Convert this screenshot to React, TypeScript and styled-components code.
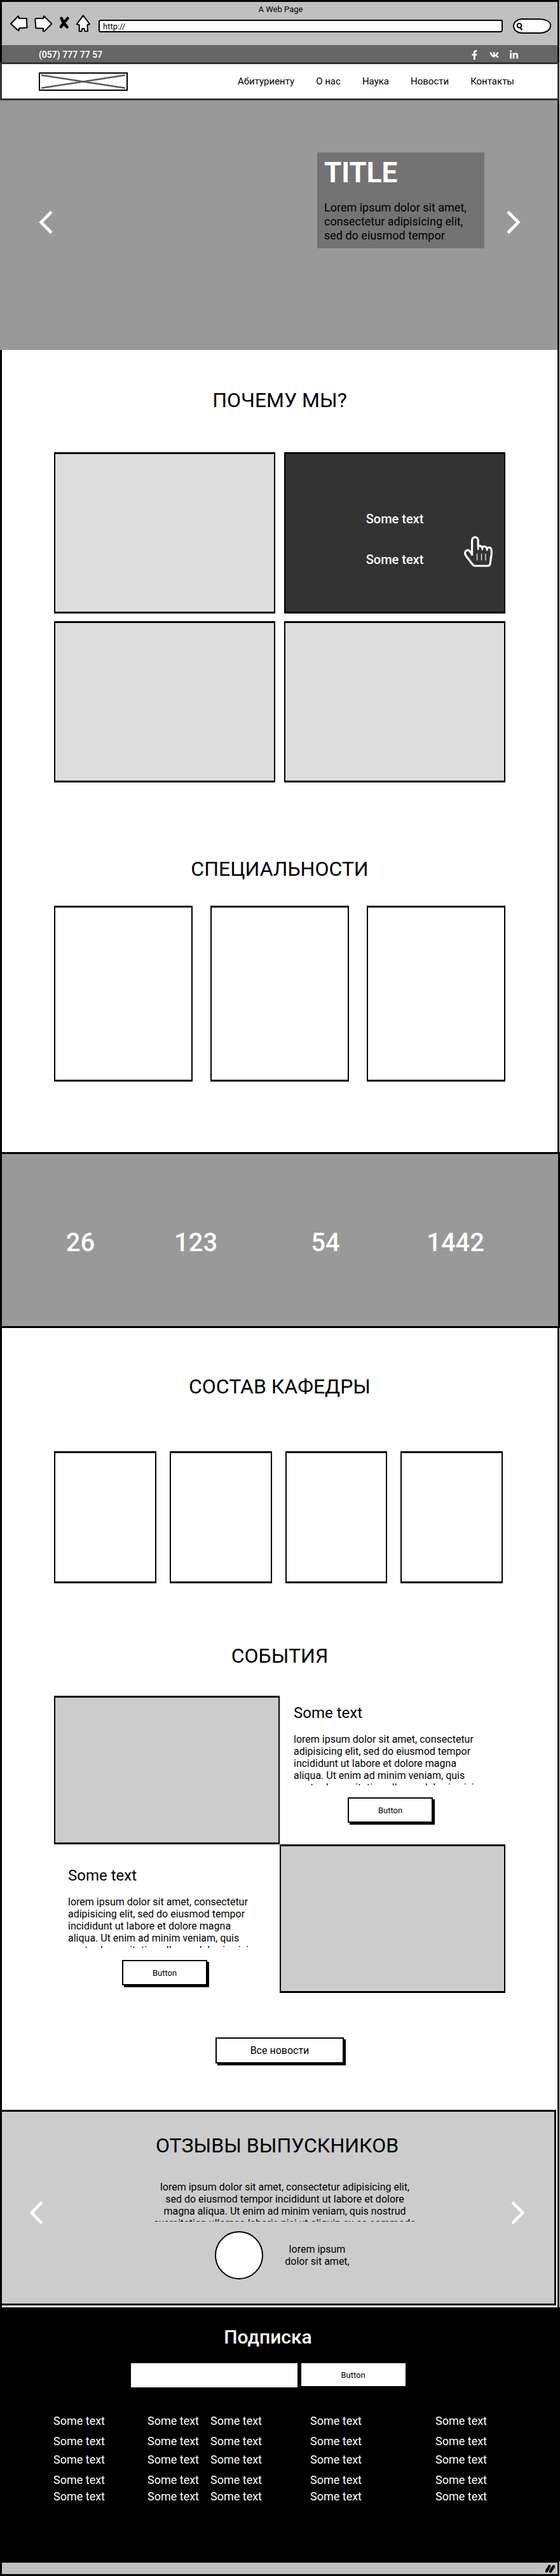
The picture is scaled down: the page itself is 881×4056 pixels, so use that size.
import React from "react";
import styled, { createGlobalStyle } from "styled-components";
import { FaFacebookF, FaLinkedinIn, FaVk } from "react-icons/fa";

const GlobalStyle = createGlobalStyle`
  *, *::before, *::after { box-sizing: border-box; }
  body {
    margin: 0;
    background: #fff;
    color: #000;
    font-family: Roboto, "Liberation Sans", sans-serif;
    font-size: 16px;
    line-height: 19px;
  }
  h1, h2, h3, p, ul { margin: 0; padding: 0; font-weight: 400; }
  ul { list-style: none; }
  a { color: inherit; text-decoration: none; }
  button, input { font: inherit; color: inherit; border-radius: 0; }
  svg { display: block; overflow: visible; }
`;

/* ---------- browser window ---------- */

const Window = styled.div`
  margin-right: 1px;
  border: solid #000;
  border-width: 3px 3px 0 3px;
`;

const Chrome = styled.header`
  padding: 2px 10px 18px 13px;
  background: #c0c0c0;
`;

const WindowTitle = styled.div`
  font-size: 13px;
  text-align: center;
`;

const Toolbar = styled.div`
  display: flex;
  align-items: flex-end;
  gap: 16px;
`;

const ToolGroup = styled.div`
  display: flex;
  gap: 10px;
  margin-right: -3px;
  padding-bottom: 2px;
`;

const IconButton = styled.button`
  flex: none;
  padding: 0;
  border: 0;
  background: none;
  cursor: pointer;
`;

const UrlInput = styled.input`
  flex: 1;
  min-width: 0;
  height: 20px;
  margin-bottom: 2px;
  padding: 0 5px;
  border: 2px solid #000;
  border-radius: 3px 2px 4px 3px;
  background: #fff;
  font-size: 13px;
`;

const SearchBox = styled.label`
  display: flex;
  align-items: center;
  width: 60px;
  height: 24px;
  padding: 0 4px 0 3px;
  border: 2px solid #000;
  border-radius: 14px 20px 18px 14px / 12px 10px 12px 12px;
  background: #fff;

  input {
    min-width: 0;
    width: 100%;
    padding: 0;
    border: 0;
    outline: 0;
    background: none;
    font-size: 13px;
  }
`;

const StatusBar = styled.div`
  display: flex;
  align-items: center;
  justify-content: flex-end;
  height: 23px;
  padding-right: 3px;
  border: solid #000;
  border-width: 2px 0 3px;
  background: #c0c0c0;
`;

/* ---------- site header ---------- */

const TopBar = styled.div`
  display: flex;
  align-items: center;
  justify-content: space-between;
  height: 27px;
  padding: 3px 61px 0 58px;
  background: #666;
  color: #fff;
  font-size: 14px;
  font-weight: 600;
`;

const Socials = styled.div`
  display: flex;
  gap: 16px;
`;

const SiteHeader = styled.div`
  display: flex;
  align-items: center;
  justify-content: space-between;
  height: 60px;
  margin: 0 -3px;
  padding: 0 68px 0 61px;
  border: 3px solid #333;
`;

const Logo = styled.a`
  display: block;
  width: 140px;
  height: 29px;
  margin-left: -3px;
  border: 2px solid #000;
`;

const Nav = styled.nav`
  display: flex;
  gap: 34px;
  font-size: 15px;
`;

/* ---------- hero ---------- */

const Hero = styled.section`
  display: flex;
  align-items: flex-start;
  justify-content: space-between;
  height: 393px;
  margin-left: -3px;
  padding: 82px 58px 0 61px;
  background: #999;
`;

const HeroArrow = styled(IconButton)`
  margin-top: 92px;
`;

const HeroCard = styled.div`
  width: 263px;
  margin: 0 35px 0 auto;
  padding: 8px 11px 9px;
  background: #737373;

  h1 {
    margin-bottom: 20px;
    color: #fff;
    font-size: 44px;
    font-weight: 700;
    line-height: 48px;
  }

  p {
    font-size: 18px;
    line-height: 22px;
  }
`;

/* ---------- content sections ---------- */

const Section = styled.section<{ $top: number; $bottom?: number }>`
  padding: ${(p) => p.$top}px 82px ${(p) => p.$bottom ?? 0}px;
`;

const Heading = styled.h2<{ $gap: number }>`
  margin-bottom: ${(p) => p.$gap}px;
  font-size: 32px;
  line-height: 40px;
  text-align: center;
`;

const Grid = styled.div<{ $columns: number; $gap: string }>`
  display: grid;
  grid-template-columns: repeat(${(p) => p.$columns}, 1fr);
  gap: ${(p) => p.$gap};
`;

const StaffGrid = styled(Grid)`
  margin-right: 4px;
`;

const Box = styled.div<{ $height: number; $fill?: string }>`
  position: relative;
  height: ${(p) => p.$height}px;
  border: solid #000;
  border-width: 3px 2px;
  background: ${(p) => p.$fill ?? "#fff"};
`;

const HoverBox = styled(Box)`
  display: flex;
  flex-direction: column;
  align-items: center;
  gap: 40px;
  padding-top: 90px;
  color: #fff;
  font-size: 20px;
  font-weight: 500;
  line-height: 24px;
`;

const HandCursor = styled.svg`
  position: absolute;
  top: 129px;
  right: 18px;
`;

const Stats = styled.section`
  display: grid;
  grid-template-columns: 183fr 181fr 227fr 183fr;
  align-items: center;
  height: 277px;
  margin: 0 -4px 0 -3px;
  padding: 8px 70px 0 32px;
  border: solid #000;
  border-width: 3px;
  background: #999;
  color: #fff;
  font-size: 40px;
  font-weight: 500;
  line-height: 48px;
  text-align: center;
`;

/* ---------- events ---------- */

const EventText = styled.article<{ $top: number }>`
  padding: ${(p) => p.$top}px 37px 0 22px;

  h3 {
    margin-bottom: 18px;
    font-size: 24px;
    line-height: 28px;
  }

  p {
    height: 82px;
    margin-bottom: 19px;
    overflow: hidden;
  }
`;

const ShadowButton = styled.button<{ $wide?: boolean }>`
  display: block;
  width: ${(p) => (p.$wide ? 202 : 134)}px;
  height: ${(p) => (p.$wide ? 41 : 40)}px;
  margin: ${(p) => (p.$wide ? "70px auto 0" : "0 0 0 85px")};
  padding: 0;
  border: 2px solid #000;
  background: #fff;
  box-shadow: 3px 3px 0 #000;
  font-size: ${(p) => (p.$wide ? 16 : 13)}px;
  cursor: pointer;
`;

/* ---------- testimonials ---------- */

const Testimonials = styled.section`
  margin: 0 2px 3px -3px;
  padding: 33px 46px 38px 43px;
  border: 3px solid #000;
  background: #ccc;
`;

const Slider = styled.div`
  display: flex;
  align-items: flex-start;
  justify-content: space-between;
`;

const SliderArrow = styled(IconButton)`
  margin-top: 32px;
`;

const Review = styled.div`
  display: flex;
  flex-direction: column;
  align-items: center;
  gap: 15px;
  padding-left: 24px;
  text-align: center;

  > p {
    width: 416px;
    height: 64px;
    overflow: hidden;
  }
`;

const Author = styled.div`
  display: flex;
  align-items: center;
  gap: 32px;
  padding-right: 6px;

  p { width: 106px; }
`;

const Avatar = styled.div`
  width: 76px;
  height: 76px;
  border: 2px solid #000;
  border-radius: 50%;
  background: #fff;
`;

/* ---------- footer ---------- */

const Footer = styled.footer`
  margin: 0 -4px 0 -3px;
  padding: 27px 86px 92px 84px;
  background: #000;
  color: #fff;
`;

const Subscribe = styled.form`
  display: grid;
  grid-template-columns: 262px 164px;
  justify-content: center;
  gap: 21px 6px;
  margin: 0 36px 43px 0;

  h2 {
    grid-column: 1 / -1;
    font-size: 30px;
    font-weight: 500;
    line-height: 40px;
    text-align: center;
  }

  input {
    height: 38px;
    padding: 0 8px;
    border: 0;
    background: #fff;
    color: #000;
  }

  button {
    height: 36px;
    border: 0;
    background: #fff;
    color: #000;
    font-size: 13px;
    cursor: pointer;
  }
`;

const FooterLinks = styled.nav`
  display: grid;
  grid-template-columns: 148fr 99fr 157fr 197fr 110fr;
  font-size: 18px;
  font-weight: 500;
  line-height: 20px;
  white-space: nowrap;

  ul {
    display: grid;
    grid-template-rows: 32px 29px 32px 26px 20px;
  }
`;

const Arrow = ({ right }: { right?: boolean }) => (
  <svg width="22" height="36" viewBox="0 0 22 36" fill="none" stroke="#fff" strokeWidth="4.6">
    <path d={right ? "M2 1.5 L18.5 18 L2 34.5" : "M20 1.5 L3.5 18 L20 34.5"} />
  </svg>
);

const lorem =
  "lorem ipsum dolor sit amet, consectetur adipisicing elit, sed do eiusmod tempor incididunt ut labore et dolore magna aliqua. Ut enim ad minim veniam, quis nostrud exercitation ullamco laboris nisi ut aliquip ex ea commodo";

const navItems = ["Абитуриенту", "О нас", "Наука", "Новости", "Контакты"];
const stats = ["26", "123", "54", "1442"];
const range = (n: number) => Array.from({ length: n }, (_, i) => i);

const EventItem = ({ top }: { top: number }) => (
  <EventText $top={top}>
    <h3>Some text</h3>
    <p>{lorem}</p>
    <ShadowButton type="button">Button</ShadowButton>
  </EventText>
);

export default function App() {
  return (
    <>
      <GlobalStyle />
      <Window>
        <Chrome>
          <WindowTitle>A Web Page</WindowTitle>
          <Toolbar>
            <ToolGroup>
              <IconButton type="button" aria-label="Back">
                <svg width="28" height="27" fill="#fff" stroke="#000" strokeWidth="2" strokeLinejoin="round">
                  <path d="M1 13.5 L12.5 1.5 Q14 1 13.6 4.8 L25.8 5 Q26 12 26.6 19.6 L14 20.4 L13.6 24 Q12.5 24.5 11 22.5 Z" />
                </svg>
              </IconButton>
              <IconButton type="button" aria-label="Forward">
                <svg width="28" height="27" fill="#fff" stroke="#000" strokeWidth="2" strokeLinejoin="round">
                  <path d="M1.2 6 L3 5 L14.2 5 L15 1.2 L27.4 13.4 L15.6 25.4 L13.8 24.8 L14.2 20.8 L2.4 20.2 Q2 13 1.2 6 Z" />
                </svg>
              </IconButton>
              <IconButton type="button" aria-label="Stop">
                <svg width="18" height="27" fill="none" stroke="#000" strokeWidth="4.6" strokeLinecap="round">
                  <path d="M4.6 4.8 Q8 13 13.6 18.6 M14.4 4.8 Q9 10 4 18.2" />
                </svg>
              </IconButton>
              <IconButton type="button" aria-label="Home">
                <svg width="22" height="27" fill="#fff" stroke="#000" strokeWidth="2" strokeLinejoin="round">
                  <path d="M10.8 0.4 L21.2 14 L17.4 15.2 L18 25 L13.4 25.2 L12.6 21 L9.2 21 L8.4 25.2 L4.6 25.2 L4.8 15.4 L0.8 14 Z" />
                </svg>
              </IconButton>
            </ToolGroup>
            <UrlInput aria-label="Address" defaultValue="http://" />
            <SearchBox>
              <svg width="10" height="11" fill="none" stroke="#000" strokeWidth="2" strokeLinecap="round">
                <circle cx="5" cy="4.4" r="3.4" />
                <path d="M6.6 7.6 L8.8 10.6" />
              </svg>
              <input aria-label="Search" />
            </SearchBox>
          </Toolbar>
        </Chrome>

        <TopBar>
          <a href="tel:0577777757">(057) 777 77 57</a>
          <Socials>
            <a href="#facebook" aria-label="Facebook"><FaFacebookF size={15} /></a>
            <a href="#vk" aria-label="VK"><FaVk size={15} /></a>
            <a href="#linkedin" aria-label="LinkedIn"><FaLinkedinIn size={15} /></a>
          </Socials>
        </TopBar>

        <SiteHeader>
          <Logo href="#home" aria-label="Home page">
            <svg width="100%" height="100%" viewBox="0 0 136 25" preserveAspectRatio="none" stroke="#595959" strokeWidth="2.6" strokeLinecap="round">
              <path d="M3 2.5 L133 22.5 M3 22.5 L133 2.5" />
            </svg>
          </Logo>
          <Nav>
            {navItems.map((item) => (
              <a key={item} href="#nav">{item}</a>
            ))}
          </Nav>
        </SiteHeader>

        <Hero>
          <HeroArrow type="button" aria-label="Previous slide"><Arrow /></HeroArrow>
          <HeroCard>
            <h1>TITLE</h1>
            <p>Lorem ipsum dolor sit amet, consectetur adipisicing elit, sed do eiusmod tempor</p>
          </HeroCard>
          <HeroArrow type="button" aria-label="Next slide"><Arrow right /></HeroArrow>
        </Hero>

        <Section $top={59}>
          <Heading $gap={62}>ПОЧЕМУ МЫ?</Heading>
          <Grid $columns={2} $gap="12px 14px">
            <Box $height={254} $fill="#ddd" />
            <HoverBox $height={254} $fill="#333">
              <span>Some text</span>
              <span>Some text</span>
              <HandCursor width="45" height="49" viewBox="0 0 45 49" fill="none" stroke="#fff" strokeWidth="3.2" strokeLinejoin="round" strokeLinecap="round">
                <path d="M12.6 29.5 C9.5 22.5 6 20.8 3.4 23.2 C1 25.6 1.4 28.8 3 31 L13.6 45 C14.8 46.6 15.8 47 17.4 47 H37 C39.4 47 40.6 46 41 44 L43.2 29 C43.8 22 43 18 39.4 18 C37.4 18 36.4 19 36.2 20.6 C35.6 15.8 30 15 28.8 18.8 C27.6 14.8 23.2 14.6 22.2 17 V7 C22.2 0.2 12.6 0.2 12.6 7 Z" />
                <path d="M22.2 16 V21 M28.8 18.6 V21.2 M36.2 20.4 V22.4" strokeWidth="2.4" />
                <path d="M20.5 28 V38 M27.5 28 V38 M34 28 V38" strokeWidth="1.2" />
              </HandCursor>
            </HoverBox>
            <Box $height={254} $fill="#ddd" />
            <Box $height={254} $fill="#ddd" />
          </Grid>
        </Section>

        <Section $top={116} $bottom={111}>
          <Heading $gap={38}>СПЕЦИАЛЬНОСТИ</Heading>
          <Grid $columns={3} $gap="28px">
            {range(3).map((i) => <Box key={i} $height={277} />)}
          </Grid>
        </Section>

        <Stats>
          {stats.map((value) => <div key={value}>{value}</div>)}
        </Stats>

        <Section $top={72}>
          <Heading $gap={82}>СОСТАВ КАФЕДРЫ</Heading>
          <StaffGrid $columns={4} $gap="21px">
            {range(4).map((i) => <Box key={i} $height={208} />)}
          </StaffGrid>
        </Section>

        <Section $top={94} $bottom={73}>
          <Heading $gap={43}>СОБЫТИЯ</Heading>
          <Grid $columns={2} $gap="0">
            <Box $height={234} $fill="#ccc" />
            <EventItem top={13} />
            <EventItem top={35} />
            <Box $height={234} $fill="#ccc" />
          </Grid>
          <ShadowButton type="button" $wide>Все новости</ShadowButton>
        </Section>

        <Testimonials>
          <Heading $gap={36}>ОТЗЫВЫ ВЫПУСКНИКОВ</Heading>
          <Slider>
            <SliderArrow type="button" aria-label="Previous review"><Arrow /></SliderArrow>
            <Review>
              <p>{lorem}</p>
              <Author>
                <Avatar />
                <p>lorem ipsum dolor sit amet,</p>
              </Author>
            </Review>
            <SliderArrow type="button" aria-label="Next review"><Arrow right /></SliderArrow>
          </Slider>
        </Testimonials>

        <Footer>
          <Subscribe>
            <h2>Подписка</h2>
            <input type="email" aria-label="Email" />
            <button type="button">Button</button>
          </Subscribe>
          <FooterLinks>
            {range(5).map((column) => (
              <ul key={column}>
                {range(5).map((row) => (
                  <li key={row}><a href="#link">Some text</a></li>
                ))}
              </ul>
            ))}
          </FooterLinks>
        </Footer>

        <StatusBar>
          <svg width="17" height="13" stroke="#000" strokeWidth="4.4" strokeLinecap="round">
            <path d="M3 10.2 L7.4 2.6 M9 10.8 L14 3" />
          </svg>
        </StatusBar>
      </Window>
    </>
  );
}
